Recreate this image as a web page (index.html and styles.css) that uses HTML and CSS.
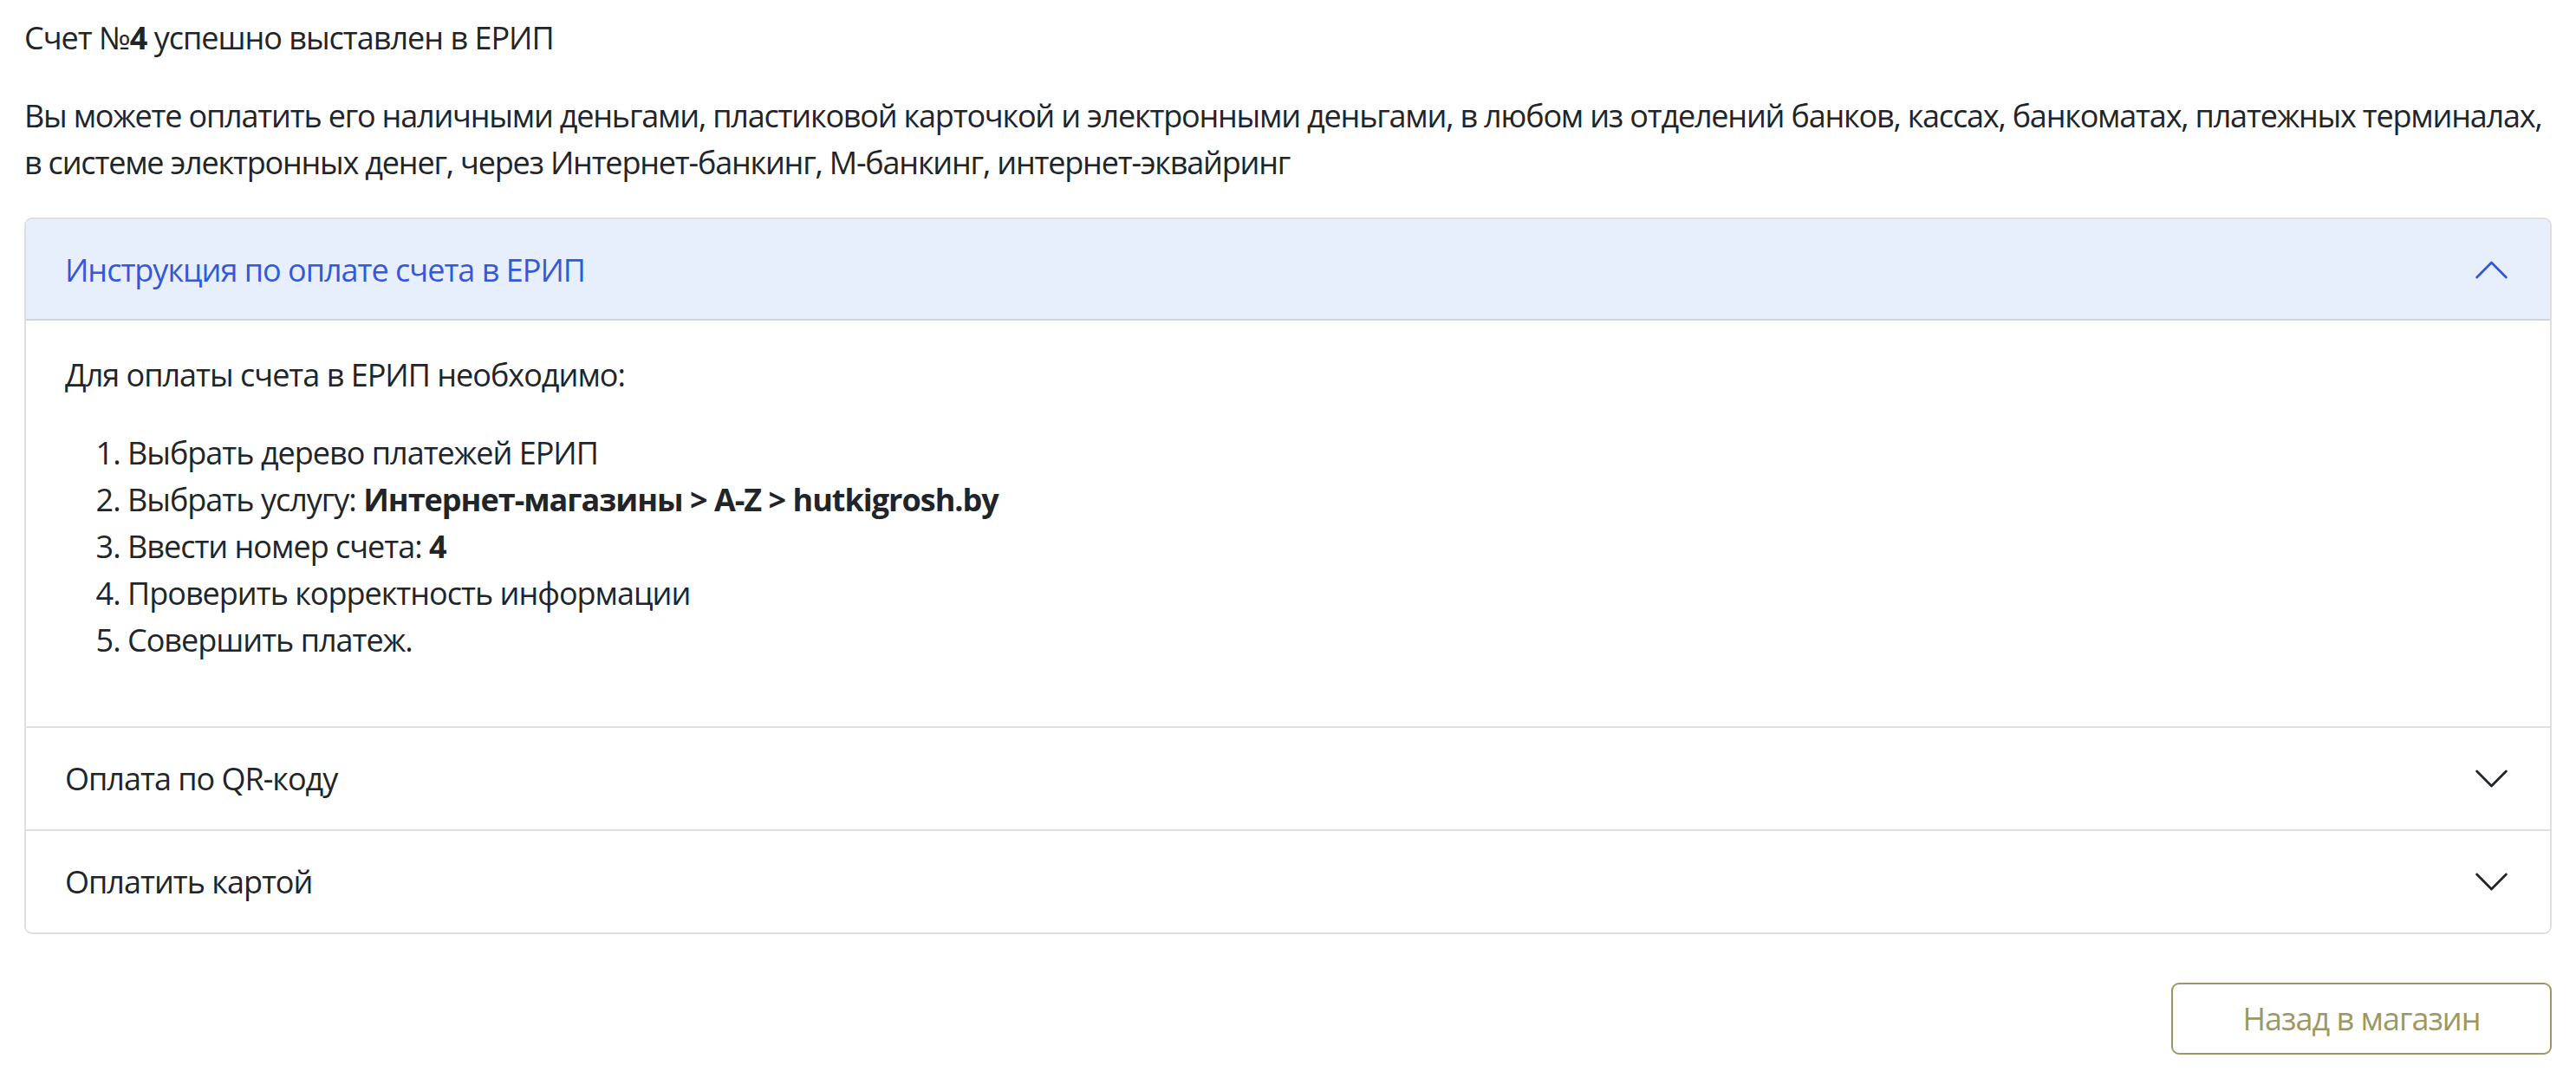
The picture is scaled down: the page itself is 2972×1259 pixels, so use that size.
FILE: index.html
```html
<!DOCTYPE html>
<html lang="ru">
<head>
<meta charset="utf-8">
<title>Счет выставлен в ЕРИП</title>
<link rel="stylesheet" href="styles.css">
</head>
<body>
<main class="page">
  <p class="title-line">Счет №<b>4</b> успешно выставлен в ЕРИП</p>
  <p class="info">Вы можете оплатить его наличными деньгами, пластиковой карточкой и электронными деньгами, в любом из отделений банков, кассах, банкоматах, платежных терминалах, в системе электронных денег, через Интернет-банкинг, М-банкинг, интернет-эквайринг</p>

  <div class="accordion">
    <div class="acc-item">
      <button class="acc-btn is-open" type="button">
        <span>Инструкция по оплате счета в ЕРИП</span>
        <svg class="chev chev-up" viewBox="0 0 16 16" aria-hidden="true"><path d="M1.646 4.646a.5.5 0 0 1 .708 0L8 10.293l5.646-5.647a.5.5 0 0 1 .708.708l-6 6a.5.5 0 0 1-.708 0l-6-6a.5.5 0 0 1 0-.708z"/></svg>
      </button>
      <div class="acc-body">
        <p>Для оплаты счета в ЕРИП необходимо:</p>
        <ol class="steps">
          <li>Выбрать дерево платежей ЕРИП</li>
          <li>Выбрать услугу: <b>Интернет-магазины &gt; A-Z &gt; hutkigrosh.by</b></li>
          <li>Ввести номер счета: <b>4</b></li>
          <li>Проверить корректность информации</li>
          <li>Совершить платеж.</li>
        </ol>
      </div>
    </div>
    <div class="acc-item">
      <button class="acc-btn" type="button">
        <span>Оплата по QR-коду</span>
        <svg class="chev" viewBox="0 0 16 16" aria-hidden="true"><path d="M1.646 4.646a.5.5 0 0 1 .708 0L8 10.293l5.646-5.647a.5.5 0 0 1 .708.708l-6 6a.5.5 0 0 1-.708 0l-6-6a.5.5 0 0 1 0-.708z"/></svg>
      </button>
    </div>
    <div class="acc-item">
      <button class="acc-btn" type="button">
        <span>Оплатить картой</span>
        <svg class="chev" viewBox="0 0 16 16" aria-hidden="true"><path d="M1.646 4.646a.5.5 0 0 1 .708 0L8 10.293l5.646-5.647a.5.5 0 0 1 .708.708l-6 6a.5.5 0 0 1-.708 0l-6-6a.5.5 0 0 1 0-.708z"/></svg>
      </button>
    </div>
  </div>

  <div class="actions">
    <a class="btn-back" href="#">Назад в магазин</a>
  </div>
</main>
</body>
</html>
```

FILE: styles.css
```css
html, body {
  margin: 0;
  padding: 0;
  background: #ffffff;
}

.page {
  padding: 17px 28px 0;
  font-family: "Open Sans", "Noto Sans", sans-serif;
  font-size: 36px;
  line-height: 54px;
  letter-spacing: -1px;
  color: #212529;
}

.page p {
  margin: 0 0 36px;
}

.page .info {
  letter-spacing: -1.2px;
}

.page b {
  font-weight: 700;
}

.accordion {
  border: 2px solid #dfdfdf;
  border-radius: 9px;
  overflow: hidden;
}

.acc-item + .acc-item {
  border-top: 2px solid #dfdfdf;
}

.acc-btn {
  display: flex;
  align-items: center;
  justify-content: space-between;
  width: 100%;
  box-sizing: border-box;
  padding: 35px 45px;
  border: 0;
  margin: 0;
  background: #ffffff;
  font: inherit;
  line-height: 47px;
  letter-spacing: inherit;
  color: #212529;
  text-align: left;
}

.acc-btn.is-open {
  background: #e8effc;
  color: #3459d8;
  box-shadow: inset 0 -2px 0 #cdd3df;
}

.chev {
  width: 45px;
  height: 45px;
  flex: none;
  fill: currentColor;
}

.chev-up {
  transform: rotate(180deg);
}

.acc-body {
  padding: 36px 45px;
}

.steps {
  margin: 0 0 36px;
  padding-left: 72px;
}

.actions {
  display: flex;
  justify-content: flex-end;
  margin-top: 56px;
}

.btn-back {
  display: flex;
  align-items: center;
  justify-content: center;
  width: 439px;
  height: 83px;
  box-sizing: border-box;
  border: 2px solid #9b9866;
  border-radius: 9px;
  color: #9b9866;
  text-decoration: none;
}
```
